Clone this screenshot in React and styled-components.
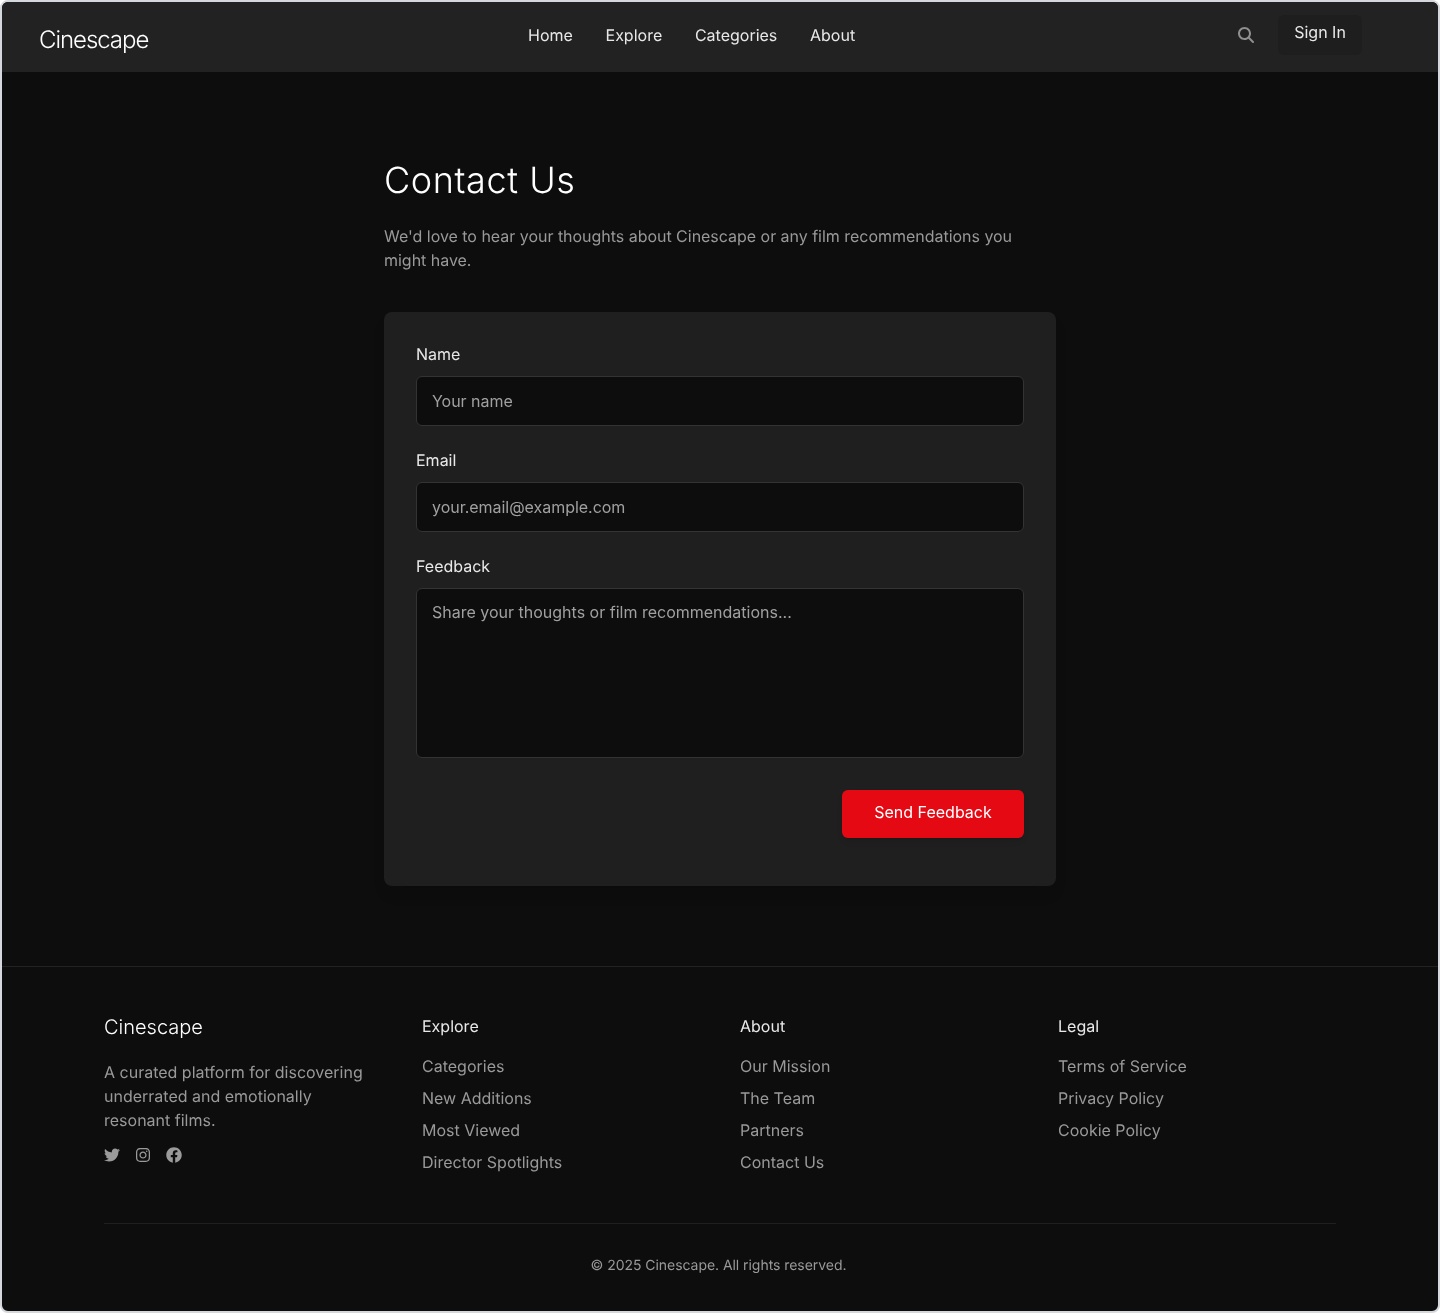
import React from 'react';
import styled, { createGlobalStyle } from 'styled-components';
import { FaTwitter, FaInstagram, FaFacebook } from 'react-icons/fa';
import { FaMagnifyingGlass } from 'react-icons/fa6';

const Global = createGlobalStyle`
  html, body { margin: 0; padding: 0; background: #fff; }
  * { box-sizing: border-box; }
  body {
    font-family: Inter, "Liberation Sans", sans-serif;
    font-weight: 400;
    text-rendering: geometricPrecision;
  }
  ::placeholder { color: #a0a0a0; opacity: 1; }
`;

const Frame = styled.div`
  height: 1313px;
  border: 2px solid #d4d7dc;
  border-radius: 8px;
  overflow: hidden;
  background: #0d0d0d;
  display: flex;
  flex-direction: column;
  will-change: transform;
`;

const Header = styled.header`
  height: 70px;
  background: #222222;
  padding: 0 76px 0 37px;
  display: flex;
  align-items: center;
`;

const Logo = styled.div`
  width: 489px;
  font-size: 24px;
  line-height: 32px;
  font-weight: 300;
  color: #fff;
  letter-spacing: -1.05px;
  margin-top: 6px;
`;

const Nav = styled.nav`
  display: flex;
  gap: 32.7px;
  margin-top: -4px;
`;

const NavLink = styled.a`
  font-size: 16px;
  line-height: 24px;
  color: #e8e8e8;
`;

const Actions = styled.div`
  margin-left: auto;
  display: flex;
  align-items: center;
  gap: 24px;
  margin-top: -4px;
`;

const IconButton = styled.span`
  display: flex;
  color: #8f8f8f;
  font-size: 16px;
`;

const SignIn = styled.button`
  width: 84px;
  height: 40px;
  background: #1e1e1e;
  color: #e8e8e8;
  border: 0;
  border-radius: 6px;
  font: 400 16px/24px Inter, sans-serif;
  padding: 0 0 6px;
`;

const Main = styled.main`
  width: 672px;
  margin: 0 auto;
  padding-top: 88px;
  height: 894px;
  flex: none;
`;

const Title = styled.h1`
  margin: 0 0 24px;
  font-size: 36px;
  line-height: 40px;
  font-weight: 300;
  color: #fff;
  letter-spacing: 0.6px;
`;

const Intro = styled.p`
  margin: 0 0 40px;
  font-size: 16px;
  line-height: 24px;
  letter-spacing: -0.025px;
  color: #999999;
`;

const Card = styled.form`
  background: #1f1f1f;
  border-radius: 8px;
  padding: 32px;
  height: 574px;
  box-shadow: 0 10px 15px -3px rgba(0,0,0,.1);
  display: flex;
  flex-direction: column;
`;

const Field = styled.div`
  margin-bottom: 24px;
  display: flex;
  flex-direction: column;
`;

const Label = styled.label`
  font-size: 16px;
  line-height: 20px;
  color: #e8e8e8;
  margin-bottom: 12px;
`;

const Input = styled.input`
  height: 50px;
  background: #0d0d0d;
  border: 1px solid #333333;
  border-radius: 6px;
  padding: 0 15px;
  font: 400 16px Inter, sans-serif;
  letter-spacing: -0.03px;
  color: #fff;
  outline: none;
`;

const TextArea = styled.textarea`
  height: 170px;
  background: #0d0d0d;
  border: 1px solid #333333;
  border-radius: 6px;
  padding: 11px 15px;
  font: 400 16px/24px Inter, sans-serif;
  color: #fff;
  resize: none;
  outline: none;
  display: block;
`;

const FormActions = styled.div`
  display: flex;
  justify-content: flex-end;
  margin-top: 8px;
`;

const Send = styled.button`
  width: 182px;
  height: 48px;
  background: #e50914;
  color: #fff;
  border: 0;
  border-radius: 6px;
  font: 400 16px/24px Inter, sans-serif;
  padding: 0 0 4px;
  box-shadow: 0 4px 6px -1px rgba(0,0,0,.1), 0 2px 4px -2px rgba(0,0,0,.1);
`;

const Footer = styled.footer`
  border-top: 1px solid #222222;
  padding: 47px 102px 0;
  flex: 1;
`;

const Columns = styled.div`
  display: grid;
  grid-template-columns: repeat(4, 278px);
  column-gap: 40px;
  height: 210px;
  border-bottom: 1px solid #1f1f1f;
`;

const Brand = styled.div`
  font-size: 20px;
  line-height: 28px;
  font-weight: 300;
  color: #fff;
  margin-bottom: 19px;
  margin-top: -1px;
`;

const Blurb = styled.p`
  margin: 0 0 15px;
  font-size: 16px;
  line-height: 24px;
  color: #999999;
`;

const Socials = styled.div`
  display: flex;
  gap: 16px;
  color: #9a9a9a;
  font-size: 16px;
  svg:nth-child(2) { width: 14px; }
`;

const ColTitle = styled.h3`
  margin: 0 0 16px;
  font-size: 16px;
  line-height: 24px;
  font-weight: 400;
  color: #e8e8e8;
`;

const List = styled.ul`
  margin: 0;
  padding: 0;
  list-style: none;
  display: flex;
  flex-direction: column;
  gap: 8px;
`;

const Item = styled.li`
  font-size: 16px;
  line-height: 24px;
  color: #999999;
`;

const Copy = styled.div`
  text-align: center;
  font-size: 14px;
  line-height: 20px;
  letter-spacing: -0.05px;
  color: #999999;
  padding: 32px 3px 0 0;
`;

const cols = [
  ['Explore', ['Categories', 'New Additions', 'Most Viewed', 'Director Spotlights']],
  ['About', ['Our Mission', 'The Team', 'Partners', 'Contact Us']],
  ['Legal', ['Terms of Service', 'Privacy Policy', 'Cookie Policy']],
];

export default function App() {
  return (
    <>
      <Global />
      <Frame>
        <Header>
          <Logo>Cinescape</Logo>
          <Nav>
            {['Home', 'Explore', 'Categories', 'About'].map((n) => <NavLink key={n}>{n}</NavLink>)}
          </Nav>
          <Actions>
            <IconButton><FaMagnifyingGlass /></IconButton>
            <SignIn type="button">Sign In</SignIn>
          </Actions>
        </Header>
        <Main>
          <Title>Contact Us</Title>
          <Intro>We'd love to hear your thoughts about Cinescape or any film recommendations you might have.</Intro>
          <Card>
            <Field>
              <Label>Name</Label>
              <Input placeholder="Your name" />
            </Field>
            <Field>
              <Label>Email</Label>
              <Input placeholder="your.email@example.com" />
            </Field>
            <Field>
              <Label>Feedback</Label>
              <TextArea placeholder="Share your thoughts or film recommendations..." />
            </Field>
            <FormActions>
              <Send type="button">Send Feedback</Send>
            </FormActions>
          </Card>
        </Main>
        <Footer>
          <Columns>
            <div>
              <Brand>Cinescape</Brand>
              <Blurb>A curated platform for discovering underrated and emotionally resonant films.</Blurb>
              <Socials>
                <FaTwitter />
                <FaInstagram />
                <FaFacebook />
              </Socials>
            </div>
            {cols.map(([t, items]) => (
              <div key={t}>
                <ColTitle>{t}</ColTitle>
                <List>{items.map((i) => <Item key={i}>{i}</Item>)}</List>
              </div>
            ))}
          </Columns>
          <Copy>© 2025 Cinescape. All rights reserved.</Copy>
        </Footer>
      </Frame>
    </>
  );
}
